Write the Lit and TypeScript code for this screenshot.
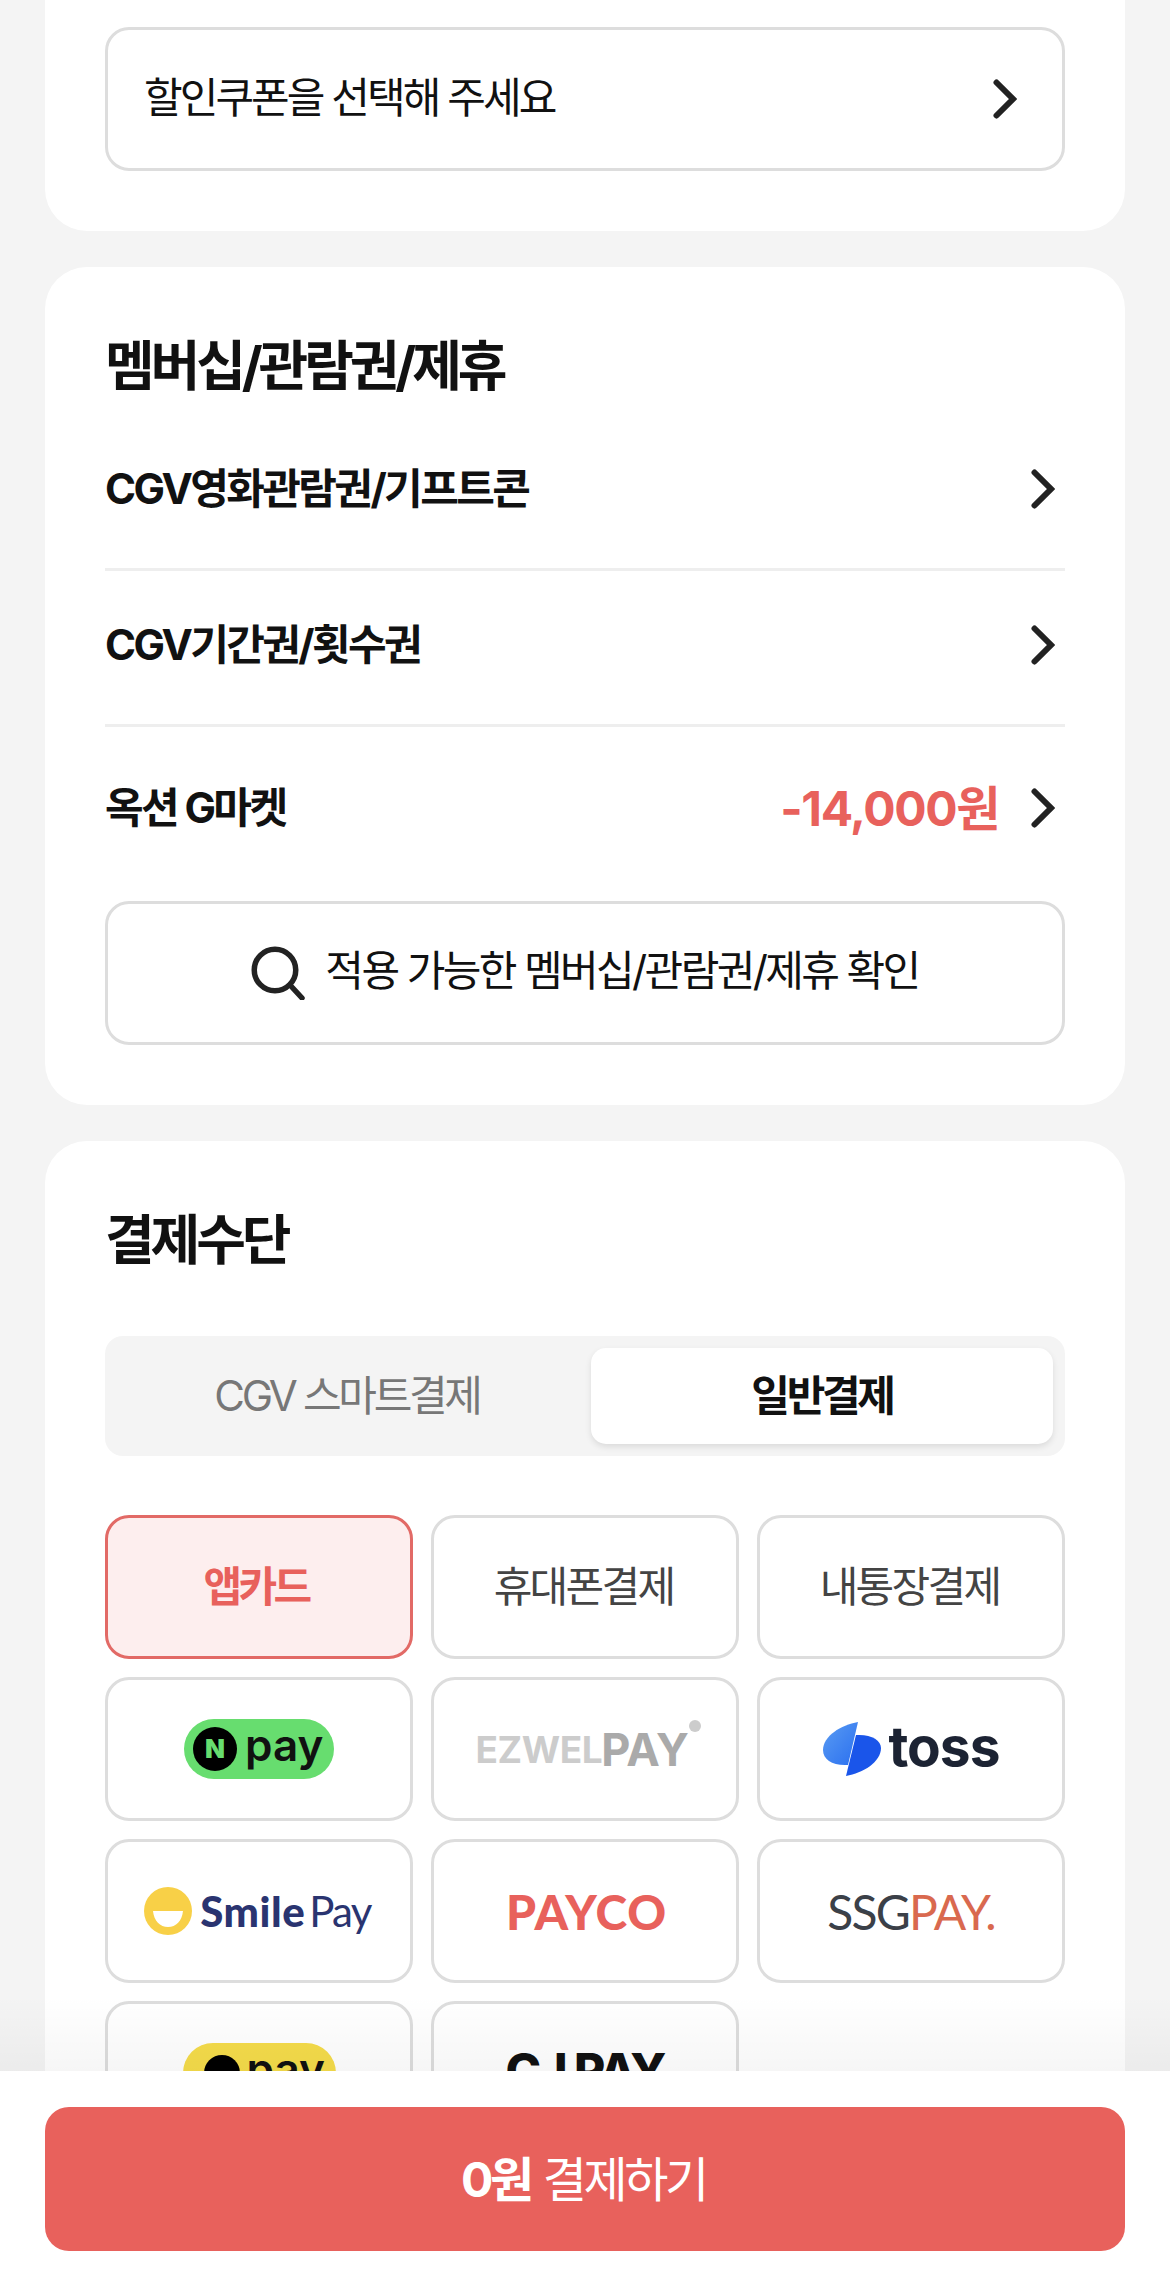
import { LitElement, html, css } from "lit";
import { customElement } from "lit/decorators.js";

const chevron = html`<svg class="chev" viewBox="0 0 24 40" width="24" height="40"><path d="M3.5 3.5 L20 20 L3.5 36.5" fill="none" stroke="#222" stroke-width="6" stroke-linecap="round" stroke-linejoin="miter"/></svg>`;

@customElement("app-root")
export class AppRoot extends LitElement {
  static styles = css`
    :host {
      display: block;
      position: relative;
      height: 2271px;
      overflow: hidden;
      background: #f4f4f4;
      font-family: Inter, "Noto Sans CJK KR", sans-serif;
      color: #111;
    }
    * { box-sizing: border-box; }
    .page { display: flex; flex-direction: column; gap: 36px; padding: 0 45px; }
    .card { background: #fff; border-radius: 42px; padding: 60px; }
    .card.first { border-radius: 0 0 42px 42px; padding-top: 27px; }
    .box {
      height: 144px;
      border: 3px solid #ddd;
      border-radius: 24px;
      display: flex;
      align-items: center;
      background: #fff;
    }
    .coupon { justify-content: space-between; padding: 0 45px 0 36px; font-size: 42px; letter-spacing: -2.95px; }
    .coupon span { padding-bottom: 10px; }
    h2 { margin: 0; font-size: 54px; line-height: 80px; font-weight: 700; letter-spacing: -4.1px; }
    .rows { margin-top: 8px; }
    .row {
      height: 156px;
      display: flex;
      align-items: center;
      font-size: 42px;
      font-weight: 700;
      letter-spacing: -2.6px;
      border-bottom: 3px solid #eee;
      padding: 0 10px 6px 0;
    }
    .row:last-child { border-bottom: 0; height: 162px; padding-bottom: 0; }
    .row .label { flex: 1; padding-bottom: 6px; }
    .row:last-child .label { padding-bottom: 8px; }
    .amount { color: #e8615c; font-size: 48px; letter-spacing: -1.4px; margin-right: 32px; padding-bottom: 6px; }
    .search { justify-content: center; gap: 20px; font-size: 42px; letter-spacing: -2.6px; margin-top: 12px; }
    .search span { padding-bottom: 12px; }
    .tabs {
      margin-top: 55px;
      height: 120px;
      background: #f4f4f4;
      border-radius: 18px;
      padding: 12px;
      display: grid;
      grid-template-columns: 1fr 462px;
      column-gap: 14px;
      font-size: 42px;
      letter-spacing: -3.3px;
    }
    .tab { display: flex; align-items: center; justify-content: center; color: #777; border-radius: 15px; padding-bottom: 8px; }
    .tab.on { background: #fff; color: #111; font-weight: 700; box-shadow: 0 3px 6px rgba(0,0,0,.1); }
    .grid { margin-top: 59px; display: grid; grid-template-columns: repeat(3, 1fr); gap: 18px; }
    .opt { justify-content: center; color: #444; }
    .txt { font-size: 42px; letter-spacing: -2.7px; padding: 0 3px 8px 0; }
    .opt.on { background: #fdeeee; border-color: #e26a66; color: #e8615c; }
    .opt.on .txt { font-weight: 700; letter-spacing: -3.6px; padding-right: 6px; }

    .npay, .kpay { height: 60px; border-radius: 30px; display: flex; align-items: center; font-weight: 600; font-size: 44px; color: #111; letter-spacing: 0; }
    .npay { width: 150px; background: #67dd6f; padding-left: 9px; gap: 8px; }
    .npay i { width: 44px; height: 44px; border-radius: 50%; background: #000; color: #67dd6f; font: 900 26px/44px Inter, sans-serif; text-align: center; flex: none; }
    .npay span, .kpay span { padding-bottom: 8px; }
    .kpay { width: 153px; background: #f5dc4a; padding-left: 21px; gap: 7px; }
    .kpay i { width: 36px; height: 36px; border-radius: 50%; background: #000; flex: none; }
    .ezwel { display: flex; align-items: center; font-weight: 700; letter-spacing: -0.4px; position: relative; padding-right: 6px; }
    .ezwel .a { font-size: 37px; color: #ccc; }
    .ezwel .b { font-size: 45px; color: #aaa; margin-left: -1px; }
    .ezwel .dot { position: absolute; right: -6px; top: -2px; width: 12px; height: 12px; border-radius: 50%; background: #ccc; }
    .toss { display: flex; align-items: center; gap: 8px; font-size: 55px; font-weight: 700; color: #1c2333; letter-spacing: -1px; }
    .toss span { padding-bottom: 6px; }
    .smile { display: flex; align-items: center; gap: 8px; font-family: Lato, sans-serif; font-size: 42px; color: #2a3470; letter-spacing: -1.7px; padding-right: 3px; }
    .smile b { font-weight: 900; margin-right: 4px; letter-spacing: 0.5px; }
    .payco { font-family: Lato, sans-serif; font-weight: 900; font-size: 48px; color: #e8615c; letter-spacing: 0.8px; padding-left: 3px; }
    .ssg { font-family: Lato, sans-serif; font-weight: 400; font-size: 48px; letter-spacing: -1.8px; color: #3b4048; }
    .ssg em { font-style: normal; color: #d9694f; }
    .cj { font-weight: 800; font-size: 48px; color: #111; letter-spacing: -2px; padding-bottom: 6px; }

    .footer { position: absolute; left: 0; right: 0; bottom: 0; height: 200px; background: #fff; padding: 36px 45px 20px; }
    .footer::before { content: ""; position: absolute; left: 0; right: 0; top: -75px; height: 75px; background: linear-gradient(rgba(0,0,0,0), rgba(0,0,0,.035)); pointer-events: none; }
    .pay { height: 144px; border-radius: 24px; background: #e8615c; color: #fff; display: flex; align-items: center; justify-content: center; font-size: 48px; letter-spacing: -3.4px; gap: 12px; padding: 0 3px 6px 0; }
    .pay b { font-weight: 700; }
  `;

  render() {
    return html`
      <div class="page">
        <section class="card first">
          <div class="box coupon"><span>할인쿠폰을 선택해 주세요</span>${chevron}</div>
        </section>
        <section class="card">
          <h2>멤버십/관람권/제휴</h2>
          <div class="rows">
            <div class="row"><span class="label">CGV영화관람권/기프트콘</span>${chevron}</div>
            <div class="row"><span class="label">CGV기간권/횟수권</span>${chevron}</div>
            <div class="row"><span class="label">옥션 G마켓</span><span class="amount">-14,000원</span>${chevron}</div>
          </div>
          <div class="box search">
            <svg viewBox="0 0 54 54" width="54" height="54"><circle cx="24" cy="24" r="20.75" fill="none" stroke="#222" stroke-width="5.5"/><path d="M39 39 L51 52" fill="none" stroke="#222" stroke-width="5.5" stroke-linecap="round"/></svg>
            <span>적용 가능한 멤버십/관람권/제휴 확인</span>
          </div>
        </section>
        <section class="card">
          <h2>결제수단</h2>
          <div class="tabs">
            <div class="tab">CGV 스마트결제</div>
            <div class="tab on">일반결제</div>
          </div>
          <div class="grid">
            <div class="box opt on"><span class="txt">앱카드</span></div>
            <div class="box opt"><span class="txt">휴대폰결제</span></div>
            <div class="box opt"><span class="txt">내통장결제</span></div>
            <div class="box opt"><div class="npay"><i>N</i><span>pay</span></div></div>
            <div class="box opt"><div class="ezwel"><span class="a">EZWEL</span><span class="b">PAY</span><i class="dot"></i></div></div>
            <div class="box opt"><div class="toss">
              <svg viewBox="0 0 58 54" width="58" height="54"><defs><linearGradient id="t1" x1="0" y1="0" x2="1" y2="1"><stop offset="0" stop-color="#5a9cf2"/><stop offset="1" stop-color="#2a6ff0"/></linearGradient></defs><path d="M35 0 C18 3 0 14 0 28 C0 38 10 44 25 43 Z" fill="url(#t1)"/><path d="M33 13 C48 12 58 18 58 26 C58 40 40 51 23 54 Z" fill="#1a55ea"/></svg>
              <span>toss</span></div></div>
            <div class="box opt"><div class="smile">
              <svg viewBox="0 0 48 48" width="48" height="48"><circle cx="24" cy="24" r="24" fill="#f8d047"/><path d="M9 24 H39 C38 34 32 40 24 40 C16 40 10 34 9 24 Z" fill="#fff"/></svg>
              <span><b>Smile</b>Pay</span></div></div>
            <div class="box opt"><span class="payco">PAYCO</span></div>
            <div class="box opt"><span class="ssg">SSG<em>PAY.</em></span></div>
            <div class="box opt"><div class="kpay"><i></i><span>pay</span></div></div>
            <div class="box opt"><span class="cj">CJ PAY</span></div>
          </div>
        </section>
      </div>
      <div class="footer"><div class="pay"><b>0원</b><span>결제하기</span></div></div>
    `;
  }
}
